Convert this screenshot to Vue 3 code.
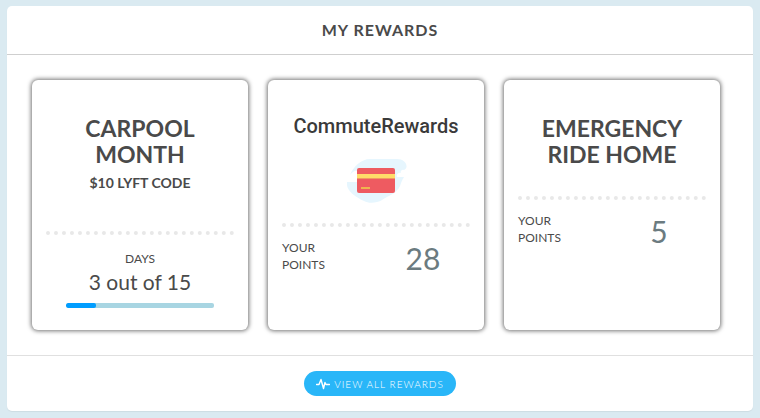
<script setup>
const carpool = { done: 3, total: 15 }
</script>

<template>
  <main class="page">
    <section class="panel" aria-labelledby="rewards-title">
      <header class="panel-header">
        <h1 id="rewards-title">MY REWARDS</h1>
      </header>

      <div class="cards">
        <article class="card">
          <h2>CARPOOL<br />MONTH</h2>
          <p class="subtitle">$10 LYFT CODE</p>
          <hr class="dots dots-far" />
          <div class="progress-block">
            <span class="label">DAYS</span>
            <span class="amount">{{ carpool.done }} out of {{ carpool.total }}</span>
            <div class="track" role="progressbar" aria-label="Days" :aria-valuenow="carpool.done" :aria-valuemax="carpool.total">
              <div class="fill" :style="{ width: (carpool.done / carpool.total) * 100 + '%' }"></div>
            </div>
          </div>
        </article>

        <article class="card">
          <h2 class="brand">CommuteRewards</h2>
          <svg class="art" width="62" height="44" viewBox="-2 0 62 44" aria-hidden="true">
            <path
              fill="#e6f6fe"
              d="M3 16C6 8 14 0 23 0H50C56 0 60 4 59.500 8C59 10 58 10 57 11C55 10 53 12 54 14C51 13 49 16 50 18H57C55 21 54 24 53 27C50 34 41 37 35 41C30 44 22 45 17 42C10 39 0 32 0 26V23H10V12C7 11 5 14 3 16Z"
            />
            <rect x="10" y="9" width="38" height="25" rx="2" fill="#ee5b61" />
            <rect x="10" y="15" width="38" height="4" fill="#ffdb69" />
            <rect x="10" y="19" width="38" height="1" fill="#f19a62" />
            <rect x="14" y="28" width="9" height="2" fill="#efb54f" />
          </svg>
          <hr class="dots" />
          <div class="points">
            <span class="label">YOUR<br />POINTS</span>
            <span class="score">28</span>
          </div>
        </article>

        <article class="card">
          <h2>EMERGENCY<br />RIDE HOME</h2>
          <hr class="dots dots-mid" />
          <div class="points">
            <span class="label">YOUR<br />POINTS</span>
            <span class="score">5</span>
          </div>
        </article>
      </div>

      <footer class="panel-footer">
        <button type="button" class="view-all">
          <svg width="14" height="12" viewBox="0 0 14 12" aria-hidden="true">
            <path
              d="M0.500 6.500H3L5 1.500L7.500 10.500L9 4.500L10 6.500H13.500"
              fill="none"
              stroke="#fff"
              stroke-width="1.400"
              stroke-linejoin="round"
              stroke-linecap="round"
            />
          </svg>
          <span>VIEW ALL REWARDS</span>
        </button>
      </footer>
    </section>
  </main>
</template>

<style>
body {
  background: #daeaf1;
}
</style>

<style scoped>
.page {
  padding: 6px 7px 7px;
  font-family: Lato, "Liberation Sans", sans-serif;
  color: #4a4a4a;
}
.panel {
  background: #fff;
  border-radius: 5px;
  box-shadow: 0 1px 1px rgba(0, 0, 0, 0.06);
}
.panel-header {
  padding: 12px 0;
  border-bottom: 1px solid #cfcfcf;
  text-align: center;
}
h1 {
  margin: 0;
  font-size: 16px;
  line-height: 24px;
  font-weight: 700;
  letter-spacing: 1px;
}
.cards {
  display: grid;
  grid-template-columns: repeat(3, 1fr);
  gap: 20px;
  padding: 25px 33px 25px 25px;
}
.card {
  min-height: 250px;
  box-sizing: border-box;
  padding: 35px 14px 22px;
  border-radius: 6px;
  box-shadow: 0 0 4px 1px rgba(0, 0, 0, 0.55);
  text-align: center;
}
h2 {
  margin: 0;
  font-size: 23px;
  line-height: 26px;
  font-weight: 700;
}
.brand {
  font-family: Roboto, sans-serif;
  font-size: 20px;
  font-weight: 500;
  line-height: 22px;
  color: #3a3a3a;
}
.subtitle {
  margin: 6px 0 0;
  font-size: 14px;
  line-height: 20px;
  font-weight: 700;
}
.art {
  display: block;
  margin: 22px auto 0;
}
.dots {
  margin: 20px 0 0;
  border: 0;
  border-top: 4px dotted #e8e8e8;
}
.dots-mid {
  margin-top: 29px;
}
.dots-far {
  margin-top: 38px;
}
.label {
  font-size: 12px;
  line-height: 17px;
}
.progress-block {
  display: flex;
  flex-direction: column;
  padding: 15px 20px 0;
}
.amount {
  font-size: 21px;
  line-height: 30px;
}
.track {
  height: 5px;
  margin-top: 6px;
  border-radius: 2px;
  background: #a8d5e2;
  overflow: hidden;
}
.fill {
  height: 100%;
  border-radius: 2px;
  background: #009dff;
}
.points {
  display: grid;
  grid-template-columns: 1fr 1fr;
  padding-top: 12px;
  text-align: left;
}
.score {
  font-size: 30px;
  line-height: 38px;
  text-align: center;
  color: #6b7b80;
}
.panel-footer {
  display: flex;
  justify-content: center;
  padding: 15px 0;
  border-top: 1px solid #e0e0e0;
}
.view-all {
  display: flex;
  align-items: center;
  gap: 4px;
  height: 25px;
  padding: 0 12px;
  border: 0;
  border-radius: 13px;
  background: #29b6f8;
  color: #fff;
  font-family: inherit;
  font-size: 10px;
  font-weight: 300;
  letter-spacing: 1px;
  cursor: pointer;
}
</style>
